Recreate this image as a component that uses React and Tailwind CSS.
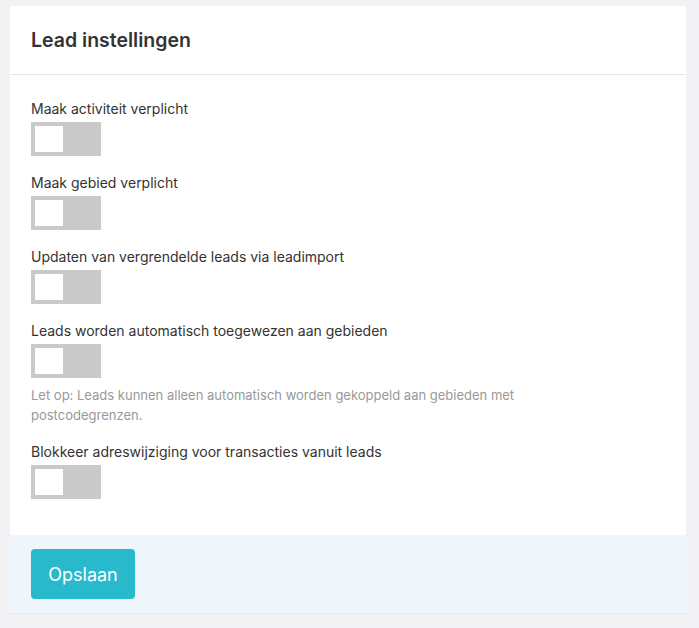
const settings = [
  { label: "Maak activiteit verplicht" },
  { label: "Maak gebied verplicht" },
  { label: "Updaten van vergrendelde leads via leadimport" },
  {
    label: "Leads worden automatisch toegewezen aan gebieden",
    help: "Let op: Leads kunnen alleen automatisch worden gekoppeld aan gebieden met postcodegrenzen.",
  },
  { label: "Blokkeer adreswijziging voor transacties vanuit leads" },
];

function Toggle() {
  return (
    <button type="button" className="flex h-[34px] w-[70px] items-center bg-[#c9c9c9] p-[4px]">
      <span className="block h-[26px] w-[28px] bg-white" />
    </button>
  );
}

export default function App() {
  return (
    <div className="min-h-[628px] bg-[#f2f2f4] pt-[6px] pl-[10px]" style={{ fontFamily: "Inter, 'Noto Sans', sans-serif" }}>
      <div className="w-[676px] border-b border-[#e3e6ea] bg-white">
        <div className="border-b border-[#e6e6e6] px-[21px] py-[20px]">
          <h2 className="text-[19.5px] leading-[28px] font-semibold text-[#333]">Lead instellingen</h2>
        </div>
        <div className="px-[21px] pt-[24px] pb-[36px]">
          {settings.map((s) => (
            <div key={s.label} className="mb-[17px] last:mb-0">
              <p className="mb-[3px] text-[14px] leading-[20px] text-[#333]">{s.label}</p>
              <Toggle />
              {s.help && (
                <p className="mt-[7px] mb-[1px] max-w-[540px] text-[13px] leading-[20px] text-[#999]">{s.help}</p>
              )}
            </div>
          ))}
        </div>
        <div className="bg-[#eef5fb] px-[21px] py-[14px]">
          <button type="button" className="h-[50px] w-[104px] rounded-[4px] bg-[#29b9cd] text-[18px] text-white">
            Opslaan
          </button>
        </div>
      </div>
    </div>
  );
}
